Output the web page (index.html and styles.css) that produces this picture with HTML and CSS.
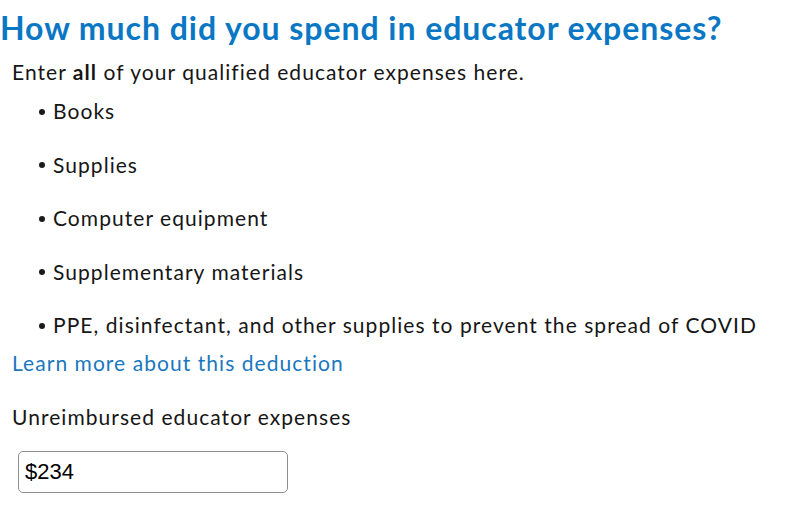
FILE: index.html
```html
<!DOCTYPE html>
<html>
<head>
<meta charset="utf-8">
<link rel="stylesheet" href="styles.css">
</head>
<body>
<main class="page">
  <h1 class="title">How much did you spend in educator expenses?</h1>
  <div class="body">
    <p class="intro">Enter <b>all</b> of your qualified educator expenses here.</p>
    <ul class="list">
      <li>Books</li>
      <li>Supplies</li>
      <li>Computer equipment</li>
      <li>Supplementary materials</li>
      <li>PPE, disinfectant, and other supplies to prevent the spread of COVID</li>
    </ul>
    <a class="learn" href="#">Learn more about this deduction</a>
    <label class="label" for="amt">Unreimbursed educator expenses</label>
    <input class="field" id="amt" type="text" value="$234">
  </div>
</main>
</body>
</html>
```

FILE: styles.css
```css
html, body {
  margin: 0;
  padding: 0;
  background: #ffffff;
}
.page {
  font-family: Lato, "Noto Sans", sans-serif;
  color: #161616;
}
.title {
  margin: 0;
  padding-top: 9px;
  font-size: 32px;
  line-height: 38px;
  font-weight: 700;
  color: #0a77c4;
  letter-spacing: 0.95px;
}
.body {
  padding-left: 12px;
  display: flex;
  flex-direction: column;
  align-items: flex-start;
  letter-spacing: 1.05px;
}
.intro {
  margin: 9px 0 0 0;
  font-size: 21px;
  line-height: 32px;
}
.intro b {
  font-weight: 700;
}
.list {
  list-style: none;
  margin: 7px 0 0 0;
  padding: 0 0 0 27px;
  font-size: 21px;
  line-height: 32px;
}
.list li {
  display: flex;
  align-items: center;
  margin: 0 0 21.5px 0;
}
.list li::before {
  content: "";
  flex: none;
  width: 6px;
  height: 6px;
  border-radius: 50%;
  background: #1a1a1a;
  margin: 1px 8px 0 0;
}
.list li:last-child {
  margin-bottom: 0;
}
.learn {
  font-size: 21px;
  line-height: 32px;
  margin-top: 6px;
  color: #1a77be;
  text-decoration: none;
}
.label {
  margin-top: 22px;
  font-size: 21px;
  line-height: 32px;
}
.field {
  margin: 18px 0 0 6px;
  width: 270px;
  height: 42px;
  box-sizing: border-box;
  border: 1px solid #8d8d8d;
  border-radius: 5px;
  padding: 0 6px;
  font-family: "Liberation Sans", Arial, sans-serif;
  font-size: 22px;
  letter-spacing: 0;
  color: #000;
  outline: none;
}
```
